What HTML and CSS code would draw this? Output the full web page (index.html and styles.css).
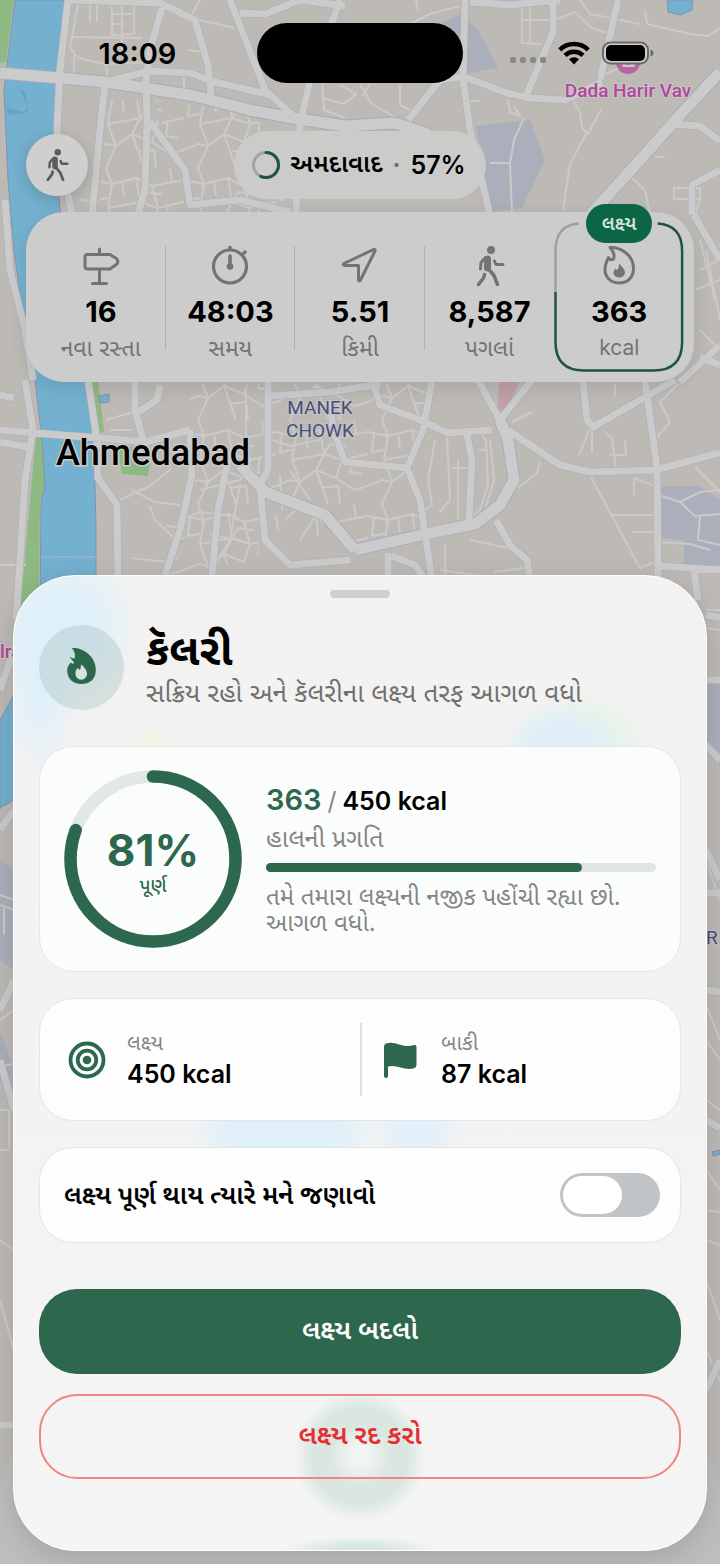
FILE: index.html
```html
<!DOCTYPE html>
<html lang="gu">
<head>
<meta charset="utf-8">
<meta name="viewport" content="width=device-width, initial-scale=1">
<title>કૅલરી</title>
<link rel="stylesheet" href="styles.css">
</head>
<body>
<svg class="defs" aria-hidden="true">
  <symbol id="walk" viewBox="0 0 40 40">
    <circle cx="21" cy="4" r="4" fill="currentColor"/>
    <g fill="none" stroke="currentColor" stroke-linecap="round" stroke-linejoin="round">
      <path d="M17.500 13 17.500 22" stroke-width="7"/>
      <path d="M15.500 11.500 11 16.500 10.500 23M24.500 15 26 18.500 33 18.500" stroke-width="3"/>
      <path d="M18.500 23 24 29.500 27.500 38.500M14.500 28.500 13.500 32 8.500 38.500" stroke-width="3.500"/>
    </g>
  </symbol>
  <symbol id="flame-solid" viewBox="5 0 31 39">
    <path fill="currentColor" d="M10 0C14-.5 18 .5 22 2.500 31 7 36 15 36 24 36 33.500 29.500 39 20 39 11 39 5 33 5 24.500 5 21 6.500 18.500 9 15.500 9.500 17 11 17.500 12.500 16.500 12 13.500 8.500 12.500 8 9.500 10.500 11.500 12 11.500 13 11 14 7 13 3.500 10 0Z"/>
    <path class="flame-core" d="M20.500 17.500C22 20 26.500 23 26.500 28A6.300 6.300 0 0 1 13.900 28C13.900 25 15 23 16.500 21.500 17 23 18 23.500 19 23 20 21.500 19.500 19.500 20.500 17.500Z"/>
  </symbol>
  <pattern id="lanes" width="92" height="84" patternUnits="userSpaceOnUse">
    <path class="lane" d="M0 12 20 16 44 10 60 18 92 12M20 16 16 40 24 62 14 84M44 10 48 34 40 50 52 84M60 18 66 40 60 58 78 70 92 66M16 40 48 34 66 40 92 34M24 62 40 50 60 58M0 66 14 60 24 62M48 34 54 24 70 26M6 14 4 32 16 30M76 36 74 52 86 54M30 14 32 28M46 68 62 66 64 84M78 0 80 14M14 0 20 16"/>
  </pattern>
</svg>

<div class="screen">
  <svg class="map" viewBox="0 0 720 1564" preserveAspectRatio="xMidYMin slice" aria-hidden="true">
    <rect class="land" width="720" height="1564"/>
    <path class="campus" d="M428 30 460 14 478 30 498 68 464 74ZM476 126 530 120 545 160 522 208 490 212ZM662 486 700 486 720 500 720 565 684 565 684 540 662 538ZM706 680 720 680 720 760 706 740ZM0 860 14 870 14 970 0 960ZM0 1030 14 1070 14 1110 0 1080Z"/>
    <path class="clinic" d="M499 380 520 380 507 408 498 412Z"/>
    <path class="green" d="M0 0 14 0 6 62 0 63ZM36 438 42 438 45 488 40 500 39 600 18 624 25 560 30 500ZM92 380 98 380 104 432 98 434ZM118 450 136 446 136 462 150 462 148 476 122 474Z"/>
    <path class="water" d="M15 0 66 0 58 70 54 130 60 210 72 300 85 380 94 440 96 530 96 620 14 800 0 808 0 720 22 680 40 620 41 500 45 488 42 440 35 380 25 330 14 250 8 180 4 90ZM667 0 693 0 692 10 680 15 668 12ZM99 396 109 394 109 402 100 403ZM712 1152 720 1150 720 1154 713 1156Z"/>
    <path class="pier" d="M7 108 24 112 28 108 20 89 25 92 28 112 8 115Z"/>
    <path class="weir" d="M41 557 97 557"/>
    <path fill="url(#lanes)" d="M108 100 145 100 185 168 185 215 98 215ZM155 100 235 110 285 135 285 215 190 215ZM190 384 265 384 262 480 258 560 170 575 185 500ZM272 384 430 384 420 430 410 500 425 530 355 545 270 490Z"/>
    <path class="lane" d="M70 37 142 38M78 4 70 48 78 58 105 64 148 62M74 50 74 76M112 6 112 35 134 34 134 4M112 14 134 14M90 4 90 22M97 4 97 22M122 4 122 50M125 24 110 24M106 64 108 80M188 50 203 52M200 0 190 18 235 28M184 75 184 90M322 80 324 110 345 118M340 85 356 94 344 104 322 98M360 84 372 104 400 120M370 84 362 96M400 85 400 105 410 110M522 5 522 43 542 44M530 0 530 43M522 20 553 20M555 20 575 12 592 28 607 33M580 0 590 14 640 24M645 10 647 24 690 34 708 36 720 28M410 24 430 14 460 6M418 12 416 0M600 76 620 68M572 98 580 112 582 128 588 134 602 108M586 134 570 164 563 210M524 118 514 140 510 163 512 215M490 163 510 163M655 157 665 157M632 178 645 190 650 215M674 188 674 199 700 199 700 188ZM700 199 695 215M514 106 520 116 510 112 508 100M480 101 462 101M80 200 98 202M106 420 130 413 142 420M110 430 132 430M120 500 150 486 172 468M132 490 155 502 180 505M150 506 155 520 176 540M132 558 168 562M180 520 200 512 226 515M200 490 240 480 245 476M166 526 185 528M210 535 240 540M240 484 230 540 212 570M246 390 246 460 258 475M272 440 290 446 320 440M280 475 282 510M290 470 310 500M300 540 316 515 318 536M285 520 296 510M278 530 276 515M0 565 26 565M0 396 12 396M435 440 428 480 432 505 422 512M447 436 450 500 440 512M458 460 458 520M480 432 486 440 488 485 480 510 468 522M490 440 494 480 485 510 470 530M478 450 486 450M452 468 468 468M518 488 537 473 540 461M470 540 508 548M445 545 445 575M440 570 520 582M494 572 525 568M590 428 579 455M592 430 592 453M605 432 612 438 616 470M610 455 626 455 625 440M512 422 532 412M591 477 640 568 655 562M612 515 655 515M632 532 655 532M634 478 634 495M634 478 655 486M662 496 680 502 700 492 720 490M680 502 695 516 720 514M700 515 698 540 720 545M660 542 690 544 710 550M695 467 720 492M678 384 660 402 670 422 656 438M615 384 615 396M652 575 652 590M700 240 715 300M695 290 720 280M700 330 720 350M700 270 720 260M706 250 720 320M0 1020 14 1010M0 1066 14 1064M0 1110 9 1110 9 1150 0 1150M0 895 14 900M0 905 14 910M4 905 4 935M0 1240 14 1250M0 1300 14 1350M706 610 720 610M706 628 720 630M706 860 720 900M706 1005 720 1040M706 1040 720 1060M706 1100 720 1110M706 1170 720 1190M706 1210 720 1212M706 1240 720 1245M706 1280 720 1320M706 1350 720 1380"/>
    <g>
      <g class="road-casing">
        <path class="w10" d="M0 73 60 78 105 82 145 88 195 96 250 110 292 118 345 126 395 123 430 135M720 72 680 115 640 160 590 215M355 550 430 533 475 524 500 505 514 480 508 440 500 420M240 465 265 492 325 515 355 550"/>
        <path class="w7" d="M68 0 60 70 57 130 63 170 72 215M70 0 160 3 195 20 208 65 211 95M105 82 150 71 190 73 215 82 270 95M162 8 150 50 146 80 147 120 145 190 138 215M230 0 265 90 300 122M105 84 100 130 92 215M150 122 185 170 190 205 240 200 290 212M310 80 300 125 296 215M340 0 330 28M240 13 265 14 300 0 345 6M465 0 463 78 470 130 490 215M462 76 507 93 530 98 565 100 602 82M553 0 553 32 526 96M618 0 600 80M408 120 440 80 460 77M470 2 510 5 560 0M670 124 700 126 720 141M720 170 692 185 692 215M25 380 33 430 25 480 20 560 16 620M0 430 60 435 100 438 145 442 190 430M88 380 97 440 98 478 117 505 118 580M0 442 33 448M5 200 10 270 25 330 33 380M190 430 192 475 180 530 165 575M230 450 218 510 212 575M135 380 135 410 143 440M160 385 157 400 138 412M268 380 268 470 260 485 265 540 290 565 350 560M330 400 333 430 345 462 407 468 423 430 432 380M407 468 420 500 432 580M478 380 500 420 532 380M508 430 560 465 590 472 655 470 720 453M645 380 657 468 658 580M583 380 587 420 593 427 675 380M375 388 380 405 420 420 448 433 492 430M467 435 472 460 469 520M388 553 388 580M392 556 415 565 427 582M496 520 510 545 527 560 530 580M270 396 330 392 380 384M658 566 720 570M694 570 698 600M0 395 14 398M706 615 720 618M706 680 720 680M706 745 720 760M706 850 720 880M706 893 720 893M0 690 14 650M0 830 14 810M0 1010 14 980M0 1060 14 1110M706 990 720 992M706 1120 720 1128M0 1425 14 1425M706 1390 720 1360M694 215 720 260M680 382 720 345M700 357 720 365"/>
      </g>
      <g class="road">
        <path class="w10" d="M0 73 60 78 105 82 145 88 195 96 250 110 292 118 345 126 395 123 430 135M720 72 680 115 640 160 590 215M355 550 430 533 475 524 500 505 514 480 508 440 500 420M240 465 265 492 325 515 355 550"/>
        <path class="w7" d="M68 0 60 70 57 130 63 170 72 215M70 0 160 3 195 20 208 65 211 95M105 82 150 71 190 73 215 82 270 95M162 8 150 50 146 80 147 120 145 190 138 215M230 0 265 90 300 122M105 84 100 130 92 215M150 122 185 170 190 205 240 200 290 212M310 80 300 125 296 215M340 0 330 28M240 13 265 14 300 0 345 6M465 0 463 78 470 130 490 215M462 76 507 93 530 98 565 100 602 82M553 0 553 32 526 96M618 0 600 80M408 120 440 80 460 77M470 2 510 5 560 0M670 124 700 126 720 141M720 170 692 185 692 215M25 380 33 430 25 480 20 560 16 620M0 430 60 435 100 438 145 442 190 430M88 380 97 440 98 478 117 505 118 580M0 442 33 448M5 200 10 270 25 330 33 380M190 430 192 475 180 530 165 575M230 450 218 510 212 575M135 380 135 410 143 440M160 385 157 400 138 412M268 380 268 470 260 485 265 540 290 565 350 560M330 400 333 430 345 462 407 468 423 430 432 380M407 468 420 500 432 580M478 380 500 420 532 380M508 430 560 465 590 472 655 470 720 453M645 380 657 468 658 580M583 380 587 420 593 427 675 380M375 388 380 405 420 420 448 433 492 430M467 435 472 460 469 520M388 553 388 580M392 556 415 565 427 582M496 520 510 545 527 560 530 580M270 396 330 392 380 384M658 566 720 570M694 570 698 600M0 395 14 398M706 615 720 618M706 680 720 680M706 745 720 760M706 850 720 880M706 893 720 893M0 690 14 650M0 830 14 810M0 1010 14 980M0 1060 14 1110M706 990 720 992M706 1120 720 1128M0 1425 14 1425M706 1390 720 1360M694 215 720 260M680 382 720 345M700 357 720 365"/>
      </g>
    </g>
    <circle class="poi-dot" cx="628" cy="62" r="12"/>
    <rect class="poi-cam" x="622" y="58" width="13" height="9" rx="2"/>
    <circle class="poi-dot" cx="628" cy="63" r="2"/>
    <text class="poi" x="628" y="97" text-anchor="middle">Dada Harir Vav</text>
    <text class="poi" x="0" y="658">lra</text>
    <text class="district" x="320" y="414" text-anchor="middle">MANEK</text>
    <text class="district" x="320" y="437" text-anchor="middle">CHOWK</text>
    <text class="district" x="706" y="944">R</text>
    <text class="city" x="153" y="465" text-anchor="middle">Ahmedabad</text>
    <rect class="dock" x="0" y="1432" width="720" height="180" rx="60"/>
  </svg>

  <header class="status">
    <time class="clock">18:09</time>
    <span class="island"></span>
    <div class="signals">
      <svg class="cell-dots" viewBox="0 0 36 6" aria-hidden="true"><g fill="#8b8988"><rect width="6" height="6" rx="2"/><rect x="10" width="6" height="6" rx="2"/><rect x="20" width="6" height="6" rx="2"/><rect x="30" width="6" height="6" rx="2"/></g></svg>
      <svg class="wifi" viewBox="0 0 32 24" aria-hidden="true"><g fill="none" stroke="#000" stroke-width="4.500"><path d="M1.800 8.800A20.500 20.500 0 0 1 30.200 8.800"/><path d="M7 14.300A13 13 0 0 1 25 14.300"/></g><path d="M11 18.300A7 7 0 0 1 21 18.300L16 23.500Z"/></svg>
      <svg class="battery" viewBox="0 0 52 24" aria-hidden="true"><rect x="1" y="1.500" width="45" height="21" rx="7.500" fill="#cfcfcf" stroke="#6c6b6b" stroke-width="2"/><rect x="4" y="4" width="39" height="16" rx="5" fill="#000"/><path d="M48.500 8.500Q51.500 9.500 51.500 12T48.500 15.500Z" fill="#6c6b6b"/></svg>
    </div>
  </header>

  <nav class="topbar">
    <button class="mode" type="button" aria-label="Walk"><svg class="mode-icon"><use href="#walk"/></svg></button>
    <button class="place" type="button">
      <svg class="mini-ring" viewBox="0 0 28 28" aria-hidden="true"><circle cx="14" cy="14" r="12.500" fill="none" stroke="#a3a3a3" stroke-width="3"/><circle cx="14" cy="14" r="12.500" fill="none" stroke="#205340" stroke-width="3" pathLength="100" stroke-dasharray="57 100" stroke-linecap="round" transform="rotate(-90 14 14)"/></svg>
      <span>અમદાવાદ</span><span class="sep">·</span><span>57%</span>
    </button>
  </nav>

  <section class="stats">
    <div class="stat">
      <svg class="stat-icon" viewBox="0 0 40 40" aria-hidden="true"><g fill="none" stroke="currentColor" stroke-width="3" stroke-linecap="round" stroke-linejoin="round"><path d="M18.500 3V8M18.500 24V37M11.500 37.500H25.500M5.500 8.500H29L36 13Q37.500 15.500 36 18L29 23H7Q4 23 4 20.500V11Q4 8.500 6.500 8.500Z"/></g></svg>
      <strong class="value">16</strong><span class="label">નવા રસ્તા</span>
    </div>
    <div class="stat">
      <svg class="stat-icon" viewBox="0 0 40 40" aria-hidden="true"><g fill="none" stroke="currentColor" stroke-width="3.200" stroke-linecap="round"><circle cx="20" cy="20.500" r="16.500"/><path d="M20 10V20M20 1.500V3.500M34 7 35 6" stroke-width="3.500"/></g><circle cx="20" cy="20.500" r="3.300" fill="currentColor"/></svg>
      <strong class="value">48:03</strong><span class="label">સમય</span>
    </div>
    <div class="stat">
      <svg class="stat-icon" viewBox="0 0 40 40" aria-hidden="true"><path d="M33.500 3.500Q35.500 3 35 5L20.500 34Q19 36 18.500 34V19.500H4.500Q2.500 19 4 17.500Z" fill="none" stroke="currentColor" stroke-width="3" stroke-linejoin="round"/></svg>
      <strong class="value">5.51</strong><span class="label">કિમી</span>
    </div>
    <div class="stat">
      <svg class="stat-icon" aria-hidden="true"><use href="#walk"/></svg>
      <strong class="value">8,587</strong><span class="label">પગલાં</span>
    </div>
    <div class="stat goal">
      <svg class="goal-frame" viewBox="0 0 130 150" preserveAspectRatio="none" aria-hidden="true"><path d="M25 1.500Q1.500 3 1.500 29V70" stroke="#a0a0a0"/><path d="M104 1.500Q128.500 3 128.500 29V120Q128.500 148.500 100 148.500H30Q1.500 148.500 1.500 120V70" stroke="#205340"/></svg>
      <span class="badge">લક્ષ્ય</span>
      <svg class="stat-icon" viewBox="0 0 40 40" aria-hidden="true"><path d="M11 1.500C23 1 34.500 10 34.500 22.500 34.500 32 28 37 20 37 11.500 37 6 31 6 23.500 6 19 8 14.500 9.500 11.500 10.500 14 12.500 14.500 14.500 13 16 9.500 14 5 11 1.500Z" fill="none" stroke="currentColor" stroke-width="3" stroke-linejoin="round"/><path d="M20.500 17.500C22 20.500 26 22.500 26 27A6 6 0 0 1 14.500 27.500C14.500 25.500 15.500 23.500 16.500 22.500 17.500 24 18.500 24 19 23 20 21.500 19.500 19.500 20.500 17.500Z" fill="currentColor"/></svg>
      <strong class="value">363</strong><span class="label unit">kcal</span>
    </div>
  </section>

  <main class="sheet">
    <div class="handle"></div>
    <header class="sheet-head">
      <span class="medal"><svg class="medal-icon" aria-hidden="true"><use href="#flame-solid"/></svg></span>
      <div>
        <h1 class="title">કૅલરી</h1>
        <p class="subtitle">સક્રિય રહો અને કૅલરીના લક્ષ્ય તરફ આગળ વધો</p>
      </div>
    </header>

    <section class="card progress">
      <div class="ring">
        <svg class="ring-art" viewBox="0 0 178 178" aria-hidden="true"><g fill="none" stroke-width="12.500"><circle cx="89" cy="89" r="82.500" stroke="#e0e9e4"/><circle cx="89" cy="89" r="82.500" stroke="#2d674e" stroke-linecap="round" pathLength="100" stroke-dasharray="80.700 100" transform="rotate(-90 89 89)"/></g></svg>
        <strong class="percent">81%</strong>
        <span class="done">પૂર્ણ</span>
      </div>
      <div class="detail">
        <p class="amount"><b class="now">363</b><span class="slash">/</span><b>450 kcal</b></p>
        <p class="caption">હાલની પ્રગતિ</p>
        <div class="bar"><div class="bar-fill" style="width:81%"></div></div>
        <p class="note">તમે તમારા લક્ષ્યની નજીક પહોંચી રહ્યા છો. આગળ વધો.</p>
      </div>
    </section>

    <section class="card facts">
      <div class="fact">
        <svg class="fact-icon" viewBox="0 0 38 38" aria-hidden="true"><g fill="none" stroke="#2d674e" stroke-width="3.800"><circle cx="19" cy="19" r="16.500"/><circle cx="19" cy="19" r="9.300"/></g><circle cx="19" cy="19" r="4.300" fill="#2d674e"/></svg>
        <div><span class="fact-label">લક્ષ્ય</span><strong class="fact-value">450 kcal</strong></div>
      </div>
      <div class="fact">
        <svg class="fact-icon" viewBox="0 0 38 38" aria-hidden="true"><path d="M2 5.500Q2 3.500 4 2.500C14-1 20 8 32 4Q34.500 3.500 34.500 6V24Q34.500 26.500 32 27.300C22 30 15 23 6 25.500V35Q6 37 4 37T2 35Z" fill="#2d674e"/></svg>
        <div><span class="fact-label">બાકી</span><strong class="fact-value">87 kcal</strong></div>
      </div>
    </section>

    <section class="card notify">
      <label class="notify-label" for="notify">લક્ષ્ય પૂર્ણ થાય ત્યારે મને જણાવો</label>
      <input class="switch" id="notify" type="checkbox" role="switch">
    </section>

    <button class="btn primary" type="button">લક્ષ્ય બદલો</button>
    <button class="btn danger" type="button">લક્ષ્ય રદ કરો</button>
  </main>
</div>
</body>
</html>
```
FILE: styles.css
```css
* { box-sizing: border-box; }
body {
  margin: 0;
  font-family: Inter, "Noto Sans Gujarati", "Noto Sans", sans-serif;
  color: #000;
  background: #bdb9b5;
}
h1, p { margin: 0; }
button { font: inherit; color: inherit; border: 0; padding: 0; cursor: pointer; }
.defs { position: absolute; width: 0; height: 0; }

.screen {
  position: relative;
  display: flex;
  flex-direction: column;
  min-height: 100vh;
  overflow: hidden;
  isolation: isolate;
}

/* Map */
.map { position: absolute; inset: 0; width: 100%; height: 100%; z-index: -1; }
.land { fill: #bdb9b5; }
.campus { fill: #abafbb; }
.clinic { fill: #c2a0a3; }
.green { fill: #8fb983; }
.water { fill: #74b0cf; stroke: #8790b0; stroke-width: 1; }
.pier { fill: #68a3c0; }
.weir { fill: none; stroke: #a5bccb; stroke-width: 1; }
.lane { fill: none; stroke: #cccac8; stroke-width: 2; stroke-linejoin: round; }
.road-casing, .road { fill: none; stroke-linejoin: round; }
.road-casing { stroke: #a9acb8; }
.road { stroke: #cbcbcc; }
.road-casing .w10 { stroke-width: 13; }
.road-casing .w7 { stroke-width: 8; }
.road .w10 { stroke-width: 11; }
.road .w7 { stroke-width: 7; }
.poi { font: 500 19px "Roboto", sans-serif; fill: #b0479c; stroke: #cbc6c8; stroke-width: 2; paint-order: stroke; }
.poi-dot { fill: #b765a5; }
.poi-cam { fill: #d2c6cf; }
.district { font: 400 19px "Roboto", sans-serif; fill: #474f78; stroke: #c6c4c4; stroke-width: 2; paint-order: stroke; }
.city { font: 500 36px "Roboto", sans-serif; fill: #000; stroke: #cbc9c8; stroke-width: 3; paint-order: stroke; }
.dock { fill: #bebebe; }

/* Status bar */
.status {
  display: grid;
  grid-template-columns: 1fr 206px 1fr;
  align-items: center;
  padding-top: 23px;
}
.clock { font-size: 29px; font-weight: 600; text-align: center; padding-left: 18px; }
.island { height: 60px; border-radius: 30px; background: #000; }
.signals { display: flex; align-items: center; justify-content: flex-end; gap: 12px; padding-right: 66px; }
.cell-dots { width: 36px; height: 6px; margin-top: 14px; }
.wifi { width: 32px; height: 24px; }
.battery { width: 52px; height: 24px; }

/* Top controls */
.topbar {
  display: grid;
  grid-template-columns: 1fr auto 1fr;
  align-items: center;
  margin-top: 48px;
  padding: 0 26px;
}
.mode {
  display: grid;
  place-items: center;
  width: 62px;
  height: 62px;
  border-radius: 50%;
  background: #cfcfcf;
  color: #5d5c5c;
  box-shadow: 0 4px 16px rgba(0, 0, 0, .18);
}
.mode-icon { width: 32px; height: 32px; }
.place {
  display: flex;
  align-items: center;
  gap: 10px;
  height: 68px;
  padding: 0 20px 0 18px;
  border-radius: 34px;
  background: rgba(204, 204, 204, .92);
  font-size: 25px;
  font-weight: 600;
}
.mini-ring { width: 28px; height: 28px; }
.sep { color: #6b6b6b; }

/* Stats */
.stats {
  display: grid;
  grid-template-columns: repeat(5, 1fr);
  margin: 13px 26px 0;
  padding: 10px;
  border-radius: 38px;
  background: #cccccc;
  box-shadow: 0 6px 20px rgba(0, 0, 0, .1);
}
.stat {
  position: relative;
  display: flex;
  flex-direction: column;
  align-items: center;
  height: 150px;
  padding-top: 24px;
  color: #737373;
}
.stat:nth-child(-n+3)::after {
  content: "";
  position: absolute;
  right: 0;
  top: 24px;
  bottom: 22px;
  width: 1px;
  background: #b0b0b0;
}
.stat-icon { width: 40px; height: 40px; }
.value { margin-top: 8px; font-size: 29px; line-height: 36px; font-weight: 700; color: #000; }
.label { font-size: 23px; line-height: 36px; white-space: nowrap; }
.unit { font-size: 21px; }
.goal-frame { position: absolute; inset: 0; width: 100%; height: 100%; fill: none; stroke-width: 2.5px; }
.badge {
  position: absolute;
  top: -18px;
  left: 50%;
  width: 66px;
  margin-left: -33px;
  border-radius: 20px;
  background: #0b6645;
  color: #d6e2dc;
  font-size: 19px;
  font-weight: 600;
  line-height: 39px;
  text-align: center;
}

/* Sheet */
.sheet {
  display: flex;
  flex-direction: column;
  margin: 193px 13px 13px;
  padding: 14px 25px 71px;
  border: 1px solid #fff;
  border-radius: 62px;
  background:
    radial-gradient(circle 72px at 50% calc(100% - 94px), #f0f4f2 0 10px, #dae7e1 30px 48px, rgba(218, 231, 225, 0) 66px),
    radial-gradient(ellipse 76px 14px at 50% 100%, #d5e6de 30%, rgba(213, 230, 222, 0)),
    radial-gradient(ellipse 82px 90px at 48px 54px, #dff0fa 40%, rgba(223, 240, 250, 0)),
    radial-gradient(ellipse 40px 80px at 26px 120px, #e1f0fa 20%, rgba(225, 240, 250, 0)),
    radial-gradient(circle 64px at 550px 186px, #deeffa 50%, rgba(222, 239, 250, 0)),
    radial-gradient(circle 78px at 564px 186px, #e6f3e7 50%, rgba(230, 243, 231, 0)),
    radial-gradient(circle 22px at 139px 168px, #f4f2e1, rgba(244, 242, 225, 0)),
    radial-gradient(ellipse 94px 40px at 270px 556px, #dff0f9 60%, rgba(223, 240, 249, 0)),
    radial-gradient(ellipse 46px 34px at 402px 556px, #e2f0f9 40%, rgba(226, 240, 249, 0)),
    linear-gradient(#f3f2f1, #f3f3f4 60%, #f5f5f5);
  box-shadow: 0 8px 30px rgba(0, 0, 0, .14);
}
.handle { align-self: center; width: 60px; height: 8px; border-radius: 4px; background: #cfcfd0; }
.sheet-head { display: flex; align-items: center; gap: 22px; margin: 27px 0 36px; height: 85px; }
.medal {
  display: grid;
  place-items: center;
  flex: none;
  width: 85px;
  height: 85px;
  padding-bottom: 4px;
  border-radius: 50%;
  background: rgba(45, 103, 78, .13);
}
.medal-icon { width: 29px; height: 36px; color: #2d674e; }
.flame-core { fill: #d6e3e2; }
.title { font-size: 43px; line-height: 50px; font-weight: 700; }
.subtitle { font-size: 26px; line-height: 38px; color: #707070; }
.card { border: 1px solid #e0e7e4; border-radius: 34px; background: #fdfdfd; }

.progress { display: flex; align-items: center; gap: 24px; padding: 23px 24px; background: #fafdfb; }
.ring {
  position: relative;
  display: flex;
  flex-direction: column;
  align-items: center;
  flex: none;
  width: 178px;
  height: 178px;
  padding-top: 54px;
  color: #2d674e;
}
.ring-art { position: absolute; inset: 0; }
.percent { font-size: 44px; line-height: 52px; font-weight: 700; }
.done { font-size: 19px; line-height: 20px; font-weight: 500; }
.detail { flex: 1; min-width: 0; color: #858585; }
.amount { display: flex; align-items: baseline; gap: 6px; font-size: 25px; line-height: 36px; color: #000; }
.amount b { font-weight: 600; }
.amount .now { font-size: 29px; color: #2d674e; }
.slash { color: #858585; }
.caption { font-size: 25px; line-height: 38px; }
.bar { margin: 6px 0 12px; height: 9px; border-radius: 5px; background: #e0e7e3; }
.bar-fill { height: 9px; border-radius: 5px; background: #2d674e; }
.note { font-size: 24px; line-height: 26px; }

.facts { display: grid; grid-template-columns: 1fr 1fr; margin-top: 26px; padding: 24px 0; }
.fact { display: flex; align-items: center; gap: 21px; height: 73px; padding-left: 28px; }
.fact + .fact { padding-left: 20px; border-left: 2px solid #dfdfdf; }
.fact-icon { width: 38px; height: 38px; }
.fact-label { display: block; font-size: 21px; line-height: 28px; color: #858585; }
.fact-value { display: block; font-size: 25px; line-height: 34px; font-weight: 600; }

.notify { display: flex; align-items: center; justify-content: space-between; margin: 26px 0 46px; padding: 24px 20px 24px 24px; }
.notify-label { font-size: 26px; line-height: 46px; font-weight: 600; }
.switch {
  appearance: none;
  width: 100px;
  height: 44px;
  margin: 0;
  padding: 3px;
  border-radius: 22px;
  background: #c1c4c6;
}
.switch::before { content: ""; display: block; width: 59px; height: 38px; border-radius: 19px; background: #fff; }
.switch:checked { background: #2d674e; }
.switch:checked::before { margin-left: auto; }

.btn { height: 85px; border-radius: 38px; font-size: 27px; font-weight: 600; }
.primary { background: #2d674e; color: #fff; }
.danger { margin-top: 20px; border: 2px solid #f08585; background: transparent; color: #e32f33; }
```
